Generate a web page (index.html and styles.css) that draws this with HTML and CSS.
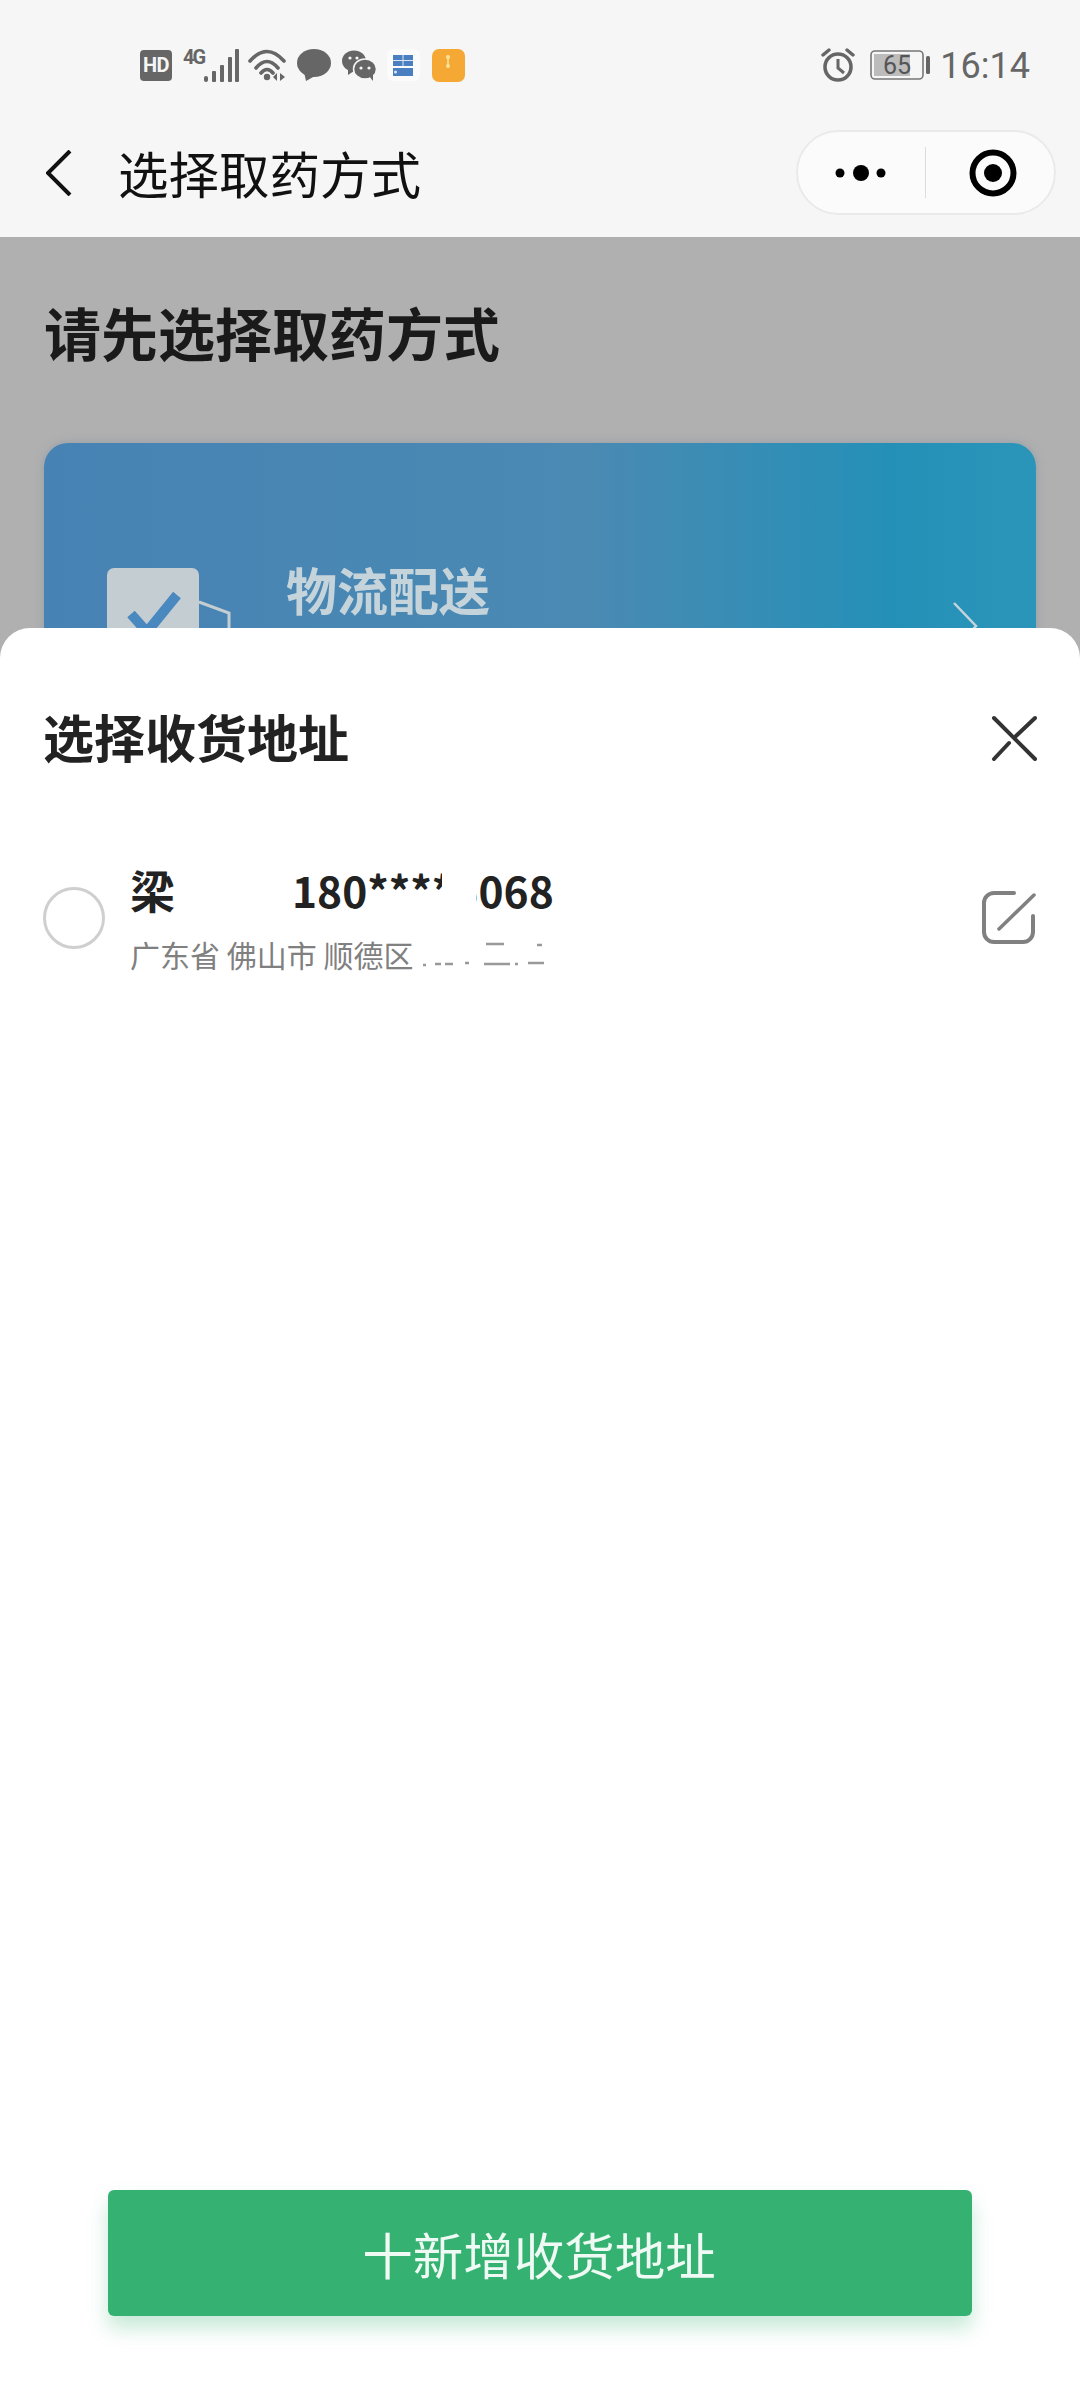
FILE: index.html
```html
<!DOCTYPE html>
<html lang="zh">
<head>
<meta charset="utf-8">
<title>选择取药方式</title>
<link rel="stylesheet" href="styles.css">
</head>
<body>
<div class="page">

  <div class="statusbar">
    <div class="status-left">
      <div class="hd">HD</div>
      <div class="net">
        <span class="net-type">4G</span>
        <svg class="signal" width="36" height="33" viewBox="0 0 36 33">
          <rect x="1" y="27" width="4" height="6" rx="2"/>
          <rect x="9" y="22" width="4" height="11" rx="1"/>
          <rect x="17" y="16" width="4" height="17" rx="1"/>
          <rect x="25" y="8" width="4" height="25" rx="1"/>
          <rect x="32" y="0" width="4" height="33" rx="1"/>
        </svg>
      </div>
      <svg class="wifi" width="40" height="34" viewBox="0 0 40 34">
        <path d="M2 13 Q19 -6 36 13 M8 20 Q19 7 30 20 M13 25 Q19 18 25 25" fill="none" stroke="#666" stroke-width="3.6" stroke-linecap="round"/>
        <circle cx="19" cy="29" r="3.2" fill="#666"/>
        <path d="M29 25 V33 L25 29 Z M32 25 L37 29 L32 33 Z" fill="#666"/>
      </svg>
      <svg class="bubble" width="34" height="32" viewBox="0 0 34 32">
        <ellipse cx="17" cy="14" rx="17" ry="14" fill="#666"/>
        <path d="M7 23 L9 32 L18 27 Z" fill="#666"/>
      </svg>
      <svg class="wechat" width="34" height="31" viewBox="0 0 34 31">
        <ellipse cx="12" cy="11" rx="12" ry="10.5" fill="#666"/>
        <path d="M6 18 L6 25 L12 21 Z" fill="#666"/>
        <ellipse cx="23" cy="19" rx="11.5" ry="10" fill="#666" stroke="#f6f6f6" stroke-width="1.5"/>
        <path d="M27 26 L31 31 L31 24 Z" fill="#666"/>
        <circle cx="8" cy="8" r="1.6" fill="#f6f6f6"/>
        <circle cx="15" cy="8" r="1.6" fill="#f6f6f6"/>
        <circle cx="19" cy="18" r="1.6" fill="#f6f6f6"/>
        <circle cx="27" cy="18" r="1.6" fill="#f6f6f6"/>
      </svg>
      <svg class="app-blue" width="33" height="32" viewBox="0 0 33 32">
        <rect width="33" height="32" rx="6" fill="#fbfbfb"/>
        <rect x="6" y="6" width="20" height="11" fill="#4a7fc1"/>
        <rect x="6" y="19" width="20" height="8" fill="#4a7fc1"/>
        <path d="M6 11.5 H26 M16 6 V17" stroke="#dce6f3" stroke-width="1"/>
        <circle cx="8.5" cy="23" r="1.5" fill="#dce6f3"/>
      </svg>
      <svg class="app-orange" width="33" height="33" viewBox="0 0 33 33">
        <rect width="33" height="33" rx="7" fill="#f5a833"/>
        <path d="M16 7 V18" stroke="#fbe49a" stroke-width="1.6"/>
        <circle cx="16" cy="8" r="2" fill="#fbe49a"/>
        <circle cx="16" cy="17" r="2" fill="#fbe49a"/>
      </svg>
    </div>
    <div class="status-right">
      <svg class="alarm" width="34" height="34" viewBox="0 0 34 34" fill="none" stroke="#666">
        <circle cx="17" cy="19" r="13" stroke-width="3.6"/>
        <path d="M17 11 V20 L23 25" stroke-width="3"/>
        <path d="M2 7 L8 2 M32 7 L26 2" stroke-width="3.4" stroke-linecap="round"/>
      </svg>
      <svg class="battery" width="61" height="30" viewBox="0 0 61 30">
        <rect x="1" y="1" width="52" height="28" rx="4" fill="#f6f6f6" stroke="#777" stroke-width="1.6"/>
        <rect x="4" y="4" width="36" height="22" fill="#bcbcbc"/>
        <rect x="56" y="6" width="4" height="18" rx="1.5" fill="#666"/>
        <text class="battery-num" x="27" y="24">65</text>
      </svg>
      <span class="clock">16:14</span>
    </div>
  </div>

  <div class="navbar">
    <svg class="back" width="26" height="46" viewBox="0 0 26 46">
      <path d="M24 1 L2 23 L24 45" fill="none" stroke="#111" stroke-width="4"/>
    </svg>
    <div class="nav-title">选择取药方式</div>
    <div class="capsule">
      <svg class="capsule-more" width="60" height="20" viewBox="0 0 60 20">
        <circle cx="9" cy="10" r="4.5"/>
        <circle cx="30" cy="10" r="8"/>
        <circle cx="50" cy="10" r="4.5"/>
      </svg>
      <div class="capsule-line"></div>
      <svg class="capsule-target" width="48" height="48" viewBox="0 0 48 48">
        <circle cx="24" cy="24" r="20.5" fill="none" stroke="#000" stroke-width="6"/>
        <circle cx="24" cy="24" r="9"/>
      </svg>
    </div>
  </div>

  <div class="backdrop">
    <h1 class="page-head">请先选择取药方式</h1>
    <div class="ship-card">
      <svg class="ship-icon" width="126" height="80" viewBox="0 0 126 80">
        <path d="M92 34 L122 45 V80" fill="none" stroke="#c4cdd2" stroke-width="3"/>
        <rect x="0" y="0" width="92" height="90" rx="7" fill="#c4cdd2"/>
        <path d="M24 46 L40 64 L70 27" fill="none" stroke="#4a88c0" stroke-width="10"/>
      </svg>
      <div class="ship-name">物流配送</div>
      <svg class="ship-arrow" width="26" height="50" viewBox="0 0 26 50">
        <path d="M2 2 L24 25 L2 48" fill="none" stroke="#c4d4dc" stroke-width="2.5"/>
      </svg>
    </div>
  </div>

  <div class="sheet">
    <div class="sheet-head">
      <div class="sheet-title">选择收货地址</div>
      <svg class="close" width="46" height="46" viewBox="0 0 46 46" fill="none" stroke="#333" stroke-width="4" stroke-linecap="round">
        <path d="M3 3 L44 44"/>
        <path d="M44 3 L25 21"/>
        <path d="M18 28 L3 44"/>
      </svg>
    </div>

    <div class="addr-row">
      <div class="radio"></div>
      <div class="addr-body">
        <div class="addr-top">
          <span class="addr-name">梁</span>
          <span class="addr-phone">180****5068<i class="mask-phone"></i></span>
        </div>
        <div class="addr-line">
          <span>广东省 佛山市 顺德区</span>
          <svg class="addr-rest" width="132" height="30" viewBox="0 0 132 30">
            <path d="M2 26 h3 M14 25 h6 M24 25 h8 M44 24 h4" stroke="#999" stroke-width="2.5"/>
            <path d="M65 5 h18 M63 25 h26 M94 25 h3 M107 24 h16 M116 6 h5" stroke="#999" stroke-width="2.5"/>
          </svg>
        </div>
      </div>
      <svg class="edit" width="54" height="54" viewBox="0 0 54 54" fill="none" stroke="#808080" stroke-width="4" stroke-linecap="round">
        <path d="M32 2 H12 A10 10 0 0 0 2 12 V41 A10 10 0 0 0 12 51 H41 A10 10 0 0 0 51 41 V25"/>
        <path d="M17 38 L52 4" stroke-width="3.5"/>
      </svg>
    </div>

    <div class="sheet-foot">
      <div class="add-btn">十新增收货地址</div>
    </div>
  </div>

</div>
</body>
</html>
```

FILE: styles.css
```css
html, body {
  margin: 0;
  padding: 0;
}

body {
  font-family: "Noto Sans CJK SC", "Noto Sans", sans-serif;
  background: #fff;
}

.page {
  position: relative;
  width: 1080px;
  height: 2400px;
  overflow: hidden;
  display: flex;
  flex-direction: column;
  background: #b0b0b0;
}

/* status bar */
.statusbar {
  height: 130px;
  box-sizing: border-box;
  padding: 0 50px 0 140px;
  background: #f6f6f6;
  display: flex;
  justify-content: space-between;
  align-items: center;
}

.status-left, .status-right {
  display: flex;
  align-items: center;
}

.hd {
  width: 32px;
  height: 31px;
  border-radius: 4px;
  background: #666;
  color: #f6f6f6;
  font-family: Roboto, sans-serif;
  font-weight: 700;
  font-size: 20px;
  line-height: 31px;
  text-align: center;
  letter-spacing: -0.5px;
}

.net {
  display: flex;
  align-items: flex-start;
  margin-left: 11px;
}

.net-type {
  width: 20px;
  font-family: Roboto, sans-serif;
  font-weight: 700;
  font-size: 20px;
  line-height: 17px;
  letter-spacing: -2px;
  color: #666;
}

.signal {
  fill: #666;
  display: block;
}

.wifi { margin-left: 9px; }
.bubble { margin-left: 9px; }
.wechat { margin-left: 11px; }
.app-blue { margin-left: 11px; }
.app-orange { margin-left: 12px; }

.alarm { display: block; }
.battery { display: block; margin-left: 15px; }

.battery-num {
  font-family: Roboto, sans-serif;
  font-size: 25px;
  fill: #555;
  text-anchor: middle;
}

.clock {
  margin: 2px 0 0 9px;
  font-family: Roboto, sans-serif;
  font-size: 36px;
  line-height: 40px;
  color: #666;
}

/* nav */
.navbar {
  height: 107px;
  box-sizing: border-box;
  padding: 0 24px 22px 46px;
  background: #f6f6f6;
  display: flex;
  align-items: center;
}

.nav-title {
  margin: -2px 0 0 46px;
  font-size: 50.5px;
  line-height: 60px;
  color: #111;
}

.capsule {
  margin-left: auto;
  width: 260px;
  height: 85px;
  box-sizing: border-box;
  border: 2px solid #eaeaea;
  border-radius: 43px;
  background: #fbfbfb;
  display: flex;
  align-items: center;
}

.capsule-more { margin-left: 33px; }

.capsule-line {
  width: 1px;
  height: 51px;
  margin-left: 34px;
  background: #dcdcdc;
}

.capsule-target { margin-left: 43px; }

/* page behind the sheet */
.backdrop {
  flex: 1;
  box-sizing: border-box;
  padding: 0 44px;
  background: #b0b0b0;
}

.page-head {
  margin: 56px 0 0;
  font-size: 57px;
  line-height: 76px;
  font-weight: 700;
  color: #1a1a1a;
}

.ship-card {
  margin-top: 74px;
  height: 340px;
  box-sizing: border-box;
  padding: 125px 58px 0 63px;
  border-radius: 24px;
  background: linear-gradient(90deg, #4782b4, #4a8ab3 55%, #2590b7 85%, #2b95b9);
  box-shadow: 0 0 8px rgba(120, 140, 160, .5);
  display: flex;
  align-items: flex-start;
}

.ship-icon { flex: none; }

.ship-name {
  margin: -14px 0 0 53px;
  font-size: 51px;
  line-height: 70px;
  font-weight: 700;
  color: #c5d3da;
}

.ship-arrow {
  margin: 33px 0 0 auto;
}

/* bottom sheet */
.sheet {
  position: absolute;
  left: 0;
  right: 0;
  top: 628px;
  bottom: 0;
  border-radius: 30px 30px 0 0;
  background: #fff;
  display: flex;
  flex-direction: column;
}

.sheet-head {
  height: 120px;
  padding: 50px 43px 0 43px;
  display: flex;
  justify-content: space-between;
  align-items: center;
}

.sheet-title {
  margin-top: -5px;
  font-size: 51px;
  line-height: 70px;
  font-weight: 700;
  color: #222;
}

.addr-row {
  margin-top: 63px;
  padding: 0 44px 0 43px;
  display: flex;
  align-items: center;
}

.radio {
  width: 62px;
  height: 62px;
  box-sizing: border-box;
  border: 3px solid #cfcfcf;
  border-radius: 50%;
}

.addr-body {
  margin-left: 25px;
}

.addr-top {
  display: flex;
  align-items: center;
  height: 60px;
  margin-top: -2px;
  color: #222;
  font-weight: 700;
  font-size: 42.5px;
}

.addr-name {
  width: 162px;
  font-size: 45px;
}

.addr-phone {
  position: relative;
}

/* the reference has part of the number wiped out */
.mask-phone {
  position: absolute;
  left: 150px;
  top: 8px;
  width: 34px;
  height: 44px;
  background: #fff;
  clip-path: polygon(0 0, 100% 0, 100% 100%, 30% 100%, 30% 70%, 0 70%);
}

.addr-line {
  margin-top: 15px;
  display: flex;
  align-items: center;
  font-size: 30px;
  line-height: 40px;
  color: #808080;
}

.addr-rest { margin-left: 8px; }

.edit { margin-left: auto; }

.sheet-foot {
  margin-top: auto;
  padding: 0 108px 84px;
}

.add-btn {
  height: 126px;
  box-sizing: border-box;
  padding-right: 2px;
  border-radius: 6px;
  background: #35b171;
  box-shadow: 0 12px 20px rgba(52, 177, 111, .28);
  color: #eefaf3;
  font-size: 50.5px;
  line-height: 126px;
  text-align: center;
}
```
